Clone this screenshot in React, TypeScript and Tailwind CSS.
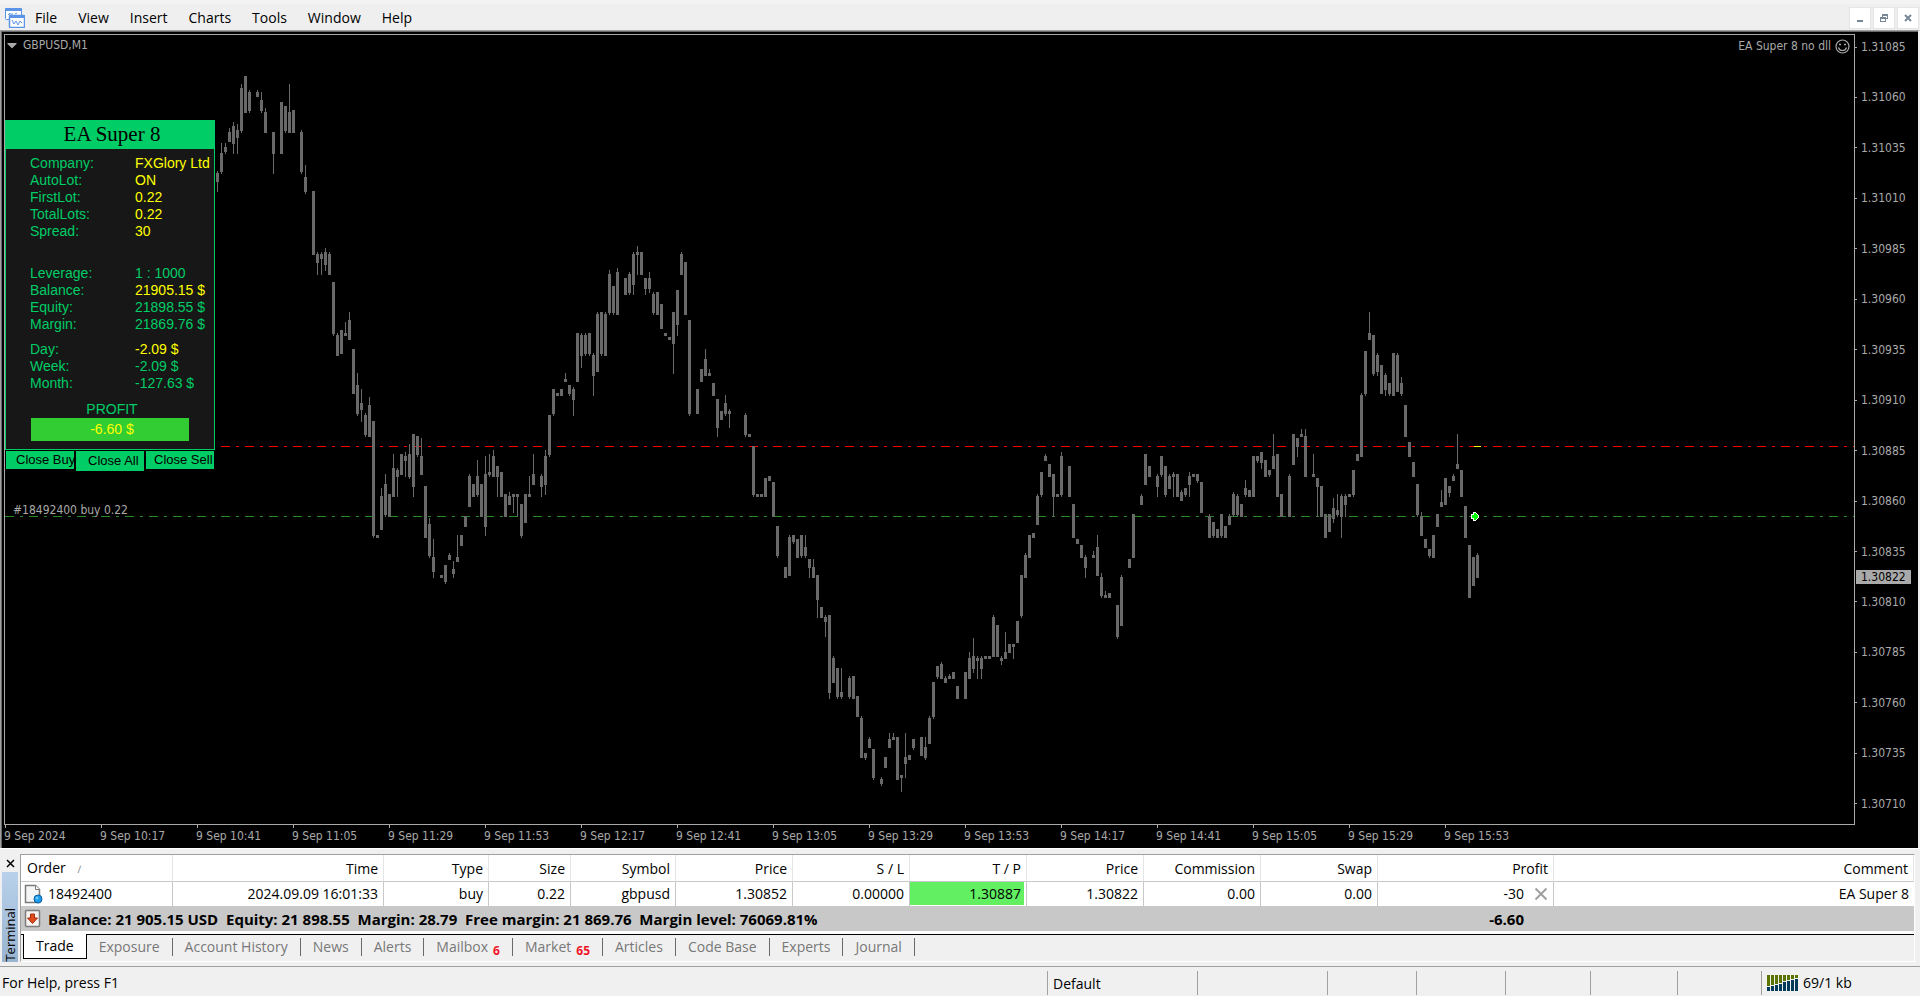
import { useState } from "react";
import { FaCaretDown } from "react-icons/fa";

// [x, high, bodyTop, bodyBottom, low]
type Candle = [number, number, number, number, number];

const candles: Candle[] = [
  [217, 171, 173, 182, 192], [221, 143, 153, 172, 174], [225, 143, 147, 152, 154], [229, 128, 132, 142, 142],
  [233, 122, 126, 144, 154], [237, 124, 130, 138, 154], [241, 84, 88, 131, 133], [245, 76, 76, 113, 113],
  [249, 90, 92, 111, 113], [257, 90, 92, 97, 97], [261, 92, 100, 111, 113], [265, 108, 112, 133, 133],
  [273, 132, 132, 154, 174], [281, 102, 102, 154, 154], [285, 106, 106, 131, 133], [289, 84, 112, 133, 133],
  [293, 110, 110, 133, 133], [301, 130, 132, 172, 174], [305, 165, 177, 192, 194], [313, 191, 191, 255, 255],
  [317, 252, 254, 263, 275], [321, 252, 254, 259, 275], [325, 248, 252, 265, 271], [329, 252, 254, 275, 275],
  [333, 282, 282, 334, 336], [337, 333, 335, 356, 356], [341, 330, 330, 354, 354], [345, 322, 333, 336, 336],
  [349, 312, 320, 340, 340], [353, 349, 349, 394, 394], [357, 373, 385, 414, 416], [361, 389, 403, 410, 422],
  [365, 413, 415, 435, 437], [369, 397, 405, 437, 437], [373, 421, 421, 536, 538], [377, 535, 535, 538, 538],
  [381, 488, 496, 530, 530], [385, 474, 484, 515, 517], [389, 494, 494, 517, 517], [393, 454, 468, 497, 497],
  [397, 468, 470, 477, 497], [401, 454, 454, 475, 475], [405, 452, 456, 461, 477], [409, 444, 454, 477, 479],
  [413, 434, 434, 487, 497], [417, 436, 436, 455, 457], [421, 438, 456, 475, 475], [425, 486, 486, 538, 538],
  [429, 518, 524, 556, 558], [433, 539, 557, 572, 578], [441, 575, 575, 578, 578], [445, 565, 565, 582, 584],
  [449, 553, 555, 560, 560], [453, 561, 569, 574, 578], [457, 535, 557, 562, 562], [461, 535, 535, 546, 546],
  [465, 516, 516, 527, 527], [469, 474, 476, 507, 507], [473, 484, 484, 497, 497], [477, 460, 476, 495, 497],
  [481, 484, 484, 517, 517], [485, 456, 474, 527, 536], [489, 454, 472, 475, 477], [493, 450, 456, 477, 477],
  [497, 466, 466, 477, 497], [501, 472, 472, 497, 497], [505, 494, 494, 517, 517], [509, 492, 496, 505, 505],
  [513, 494, 494, 497, 513], [517, 494, 494, 497, 517], [521, 504, 504, 536, 538], [525, 494, 494, 523, 523],
  [529, 476, 494, 497, 497], [533, 454, 474, 485, 485], [541, 474, 476, 487, 497], [545, 450, 456, 485, 495],
  [549, 415, 415, 455, 457], [553, 389, 389, 414, 416], [557, 393, 393, 396, 396], [561, 389, 389, 396, 396],
  [565, 373, 379, 382, 382], [569, 385, 385, 394, 396], [573, 387, 389, 400, 416], [577, 333, 333, 382, 382],
  [581, 333, 335, 356, 368], [585, 333, 335, 354, 356], [589, 333, 333, 354, 356], [593, 353, 355, 376, 396],
  [597, 312, 314, 372, 372], [601, 312, 312, 354, 356], [605, 312, 314, 356, 356], [609, 270, 274, 313, 315],
  [613, 286, 286, 313, 315], [617, 268, 272, 315, 315], [625, 278, 278, 295, 295], [629, 272, 274, 293, 295],
  [633, 252, 254, 285, 295], [637, 246, 252, 255, 275], [641, 252, 252, 275, 275], [645, 278, 278, 289, 295],
  [649, 272, 278, 289, 293], [653, 292, 294, 313, 315], [657, 292, 292, 315, 315], [661, 304, 304, 329, 329],
  [665, 333, 333, 336, 336], [669, 337, 337, 340, 340], [673, 312, 312, 344, 374], [677, 290, 290, 325, 336],
  [681, 252, 254, 275, 275], [685, 262, 262, 315, 315], [689, 320, 320, 414, 416], [697, 389, 389, 414, 414],
  [701, 369, 369, 382, 382], [705, 349, 359, 376, 376], [709, 369, 373, 376, 376], [713, 383, 383, 396, 396],
  [717, 399, 399, 428, 437], [721, 411, 411, 420, 420], [725, 395, 403, 414, 416], [729, 409, 411, 414, 428],
  [745, 413, 415, 435, 437], [749, 434, 434, 437, 437], [753, 446, 446, 495, 497], [757, 494, 494, 497, 497],
  [761, 494, 494, 497, 497], [765, 478, 478, 497, 497], [769, 476, 476, 481, 481], [773, 482, 482, 517, 517],
  [777, 526, 526, 556, 558], [785, 567, 567, 578, 578], [789, 535, 537, 576, 576], [793, 535, 535, 542, 544],
  [797, 539, 539, 558, 558], [801, 535, 535, 556, 558], [805, 535, 547, 556, 558], [809, 559, 559, 568, 578],
  [813, 559, 567, 578, 578], [817, 575, 575, 600, 618], [821, 607, 607, 618, 618], [825, 615, 617, 622, 637],
  [829, 615, 615, 693, 699], [833, 656, 658, 683, 683], [837, 668, 668, 697, 699], [841, 668, 692, 697, 699],
  [849, 676, 678, 697, 699], [853, 676, 676, 699, 699], [857, 696, 696, 717, 717], [861, 716, 718, 758, 758],
  [865, 753, 753, 758, 760], [869, 737, 739, 748, 748], [873, 749, 749, 778, 780], [881, 777, 779, 784, 786],
  [885, 757, 757, 768, 768], [889, 733, 739, 748, 748], [893, 733, 737, 740, 740], [897, 737, 737, 780, 780],
  [901, 775, 775, 778, 792], [905, 733, 757, 764, 778], [909, 755, 755, 760, 760], [913, 739, 739, 748, 750],
  [921, 737, 737, 756, 756], [925, 737, 747, 758, 760], [929, 716, 718, 744, 744], [933, 682, 682, 717, 719],
  [937, 666, 666, 677, 679], [941, 662, 664, 679, 679], [945, 676, 678, 683, 683], [949, 674, 676, 679, 679],
  [953, 672, 672, 679, 679], [957, 686, 686, 699, 699], [965, 672, 672, 699, 699], [969, 652, 658, 679, 679],
  [973, 638, 656, 669, 673], [977, 656, 658, 661, 679], [981, 656, 658, 669, 679], [985, 656, 656, 659, 659],
  [989, 656, 656, 659, 659], [993, 615, 617, 657, 657], [997, 625, 625, 657, 657], [1001, 656, 658, 661, 665],
  [1005, 632, 652, 659, 659], [1009, 644, 644, 653, 653], [1013, 644, 644, 647, 659], [1017, 621, 621, 643, 643],
  [1021, 575, 575, 616, 618], [1025, 553, 555, 578, 578], [1029, 535, 535, 558, 558], [1033, 533, 533, 538, 538],
  [1037, 494, 496, 525, 525], [1041, 472, 472, 495, 497], [1045, 454, 456, 461, 461], [1049, 464, 464, 477, 477],
  [1053, 474, 474, 497, 517], [1057, 494, 494, 497, 497], [1061, 452, 456, 495, 497], [1069, 466, 466, 497, 497],
  [1073, 504, 504, 538, 538], [1077, 539, 539, 544, 544], [1081, 545, 545, 558, 558], [1085, 555, 557, 568, 578],
  [1093, 551, 555, 558, 558], [1097, 535, 547, 576, 576], [1101, 573, 577, 596, 598], [1105, 591, 595, 598, 598],
  [1109, 593, 593, 598, 598], [1117, 605, 605, 637, 639], [1121, 575, 577, 626, 626], [1129, 559, 559, 568, 568],
  [1133, 514, 514, 558, 558], [1141, 494, 496, 505, 505], [1145, 454, 454, 485, 485], [1149, 466, 466, 477, 477],
  [1157, 474, 476, 487, 497], [1161, 456, 456, 475, 477], [1165, 466, 466, 495, 497], [1169, 474, 476, 489, 489],
  [1173, 472, 474, 477, 497], [1177, 474, 474, 497, 497], [1181, 490, 492, 501, 501], [1185, 488, 488, 495, 497],
  [1189, 472, 476, 485, 497], [1193, 474, 474, 477, 477], [1197, 474, 474, 481, 483], [1201, 482, 482, 513, 513],
  [1209, 514, 516, 538, 538], [1213, 522, 522, 536, 538], [1217, 529, 529, 538, 538], [1221, 514, 514, 536, 538],
  [1225, 526, 526, 538, 538], [1229, 514, 516, 525, 525], [1233, 492, 494, 515, 517], [1237, 494, 496, 515, 517],
  [1241, 504, 504, 517, 517], [1245, 480, 488, 495, 497], [1249, 490, 490, 497, 497], [1253, 456, 456, 497, 497],
  [1257, 456, 456, 461, 463], [1261, 452, 452, 463, 469], [1265, 460, 460, 477, 477], [1269, 470, 470, 475, 477],
  [1273, 434, 456, 469, 469], [1277, 454, 454, 497, 497], [1281, 494, 494, 517, 517], [1289, 474, 476, 517, 517],
  [1293, 434, 434, 465, 465], [1297, 438, 438, 447, 457], [1301, 429, 434, 437, 437], [1305, 429, 436, 477, 477],
  [1313, 454, 474, 477, 477], [1317, 478, 478, 487, 517], [1321, 486, 486, 517, 517], [1325, 514, 514, 538, 538],
  [1329, 514, 514, 532, 532], [1333, 498, 508, 519, 523], [1337, 494, 510, 515, 517], [1341, 494, 496, 517, 538],
  [1345, 494, 496, 505, 517], [1349, 494, 494, 497, 497], [1353, 470, 470, 495, 497], [1357, 454, 454, 461, 461],
  [1361, 393, 395, 457, 457], [1365, 351, 351, 394, 396], [1369, 312, 333, 340, 340], [1373, 335, 335, 374, 376],
  [1377, 353, 355, 372, 376], [1381, 365, 365, 394, 394], [1385, 373, 375, 390, 396], [1389, 383, 383, 394, 396],
  [1393, 353, 353, 396, 396], [1397, 353, 355, 392, 392], [1401, 377, 383, 394, 396], [1405, 405, 405, 437, 437],
  [1409, 442, 442, 457, 457], [1413, 462, 462, 477, 477], [1417, 484, 484, 515, 517], [1421, 512, 516, 536, 536],
  [1425, 539, 539, 548, 548], [1429, 549, 549, 556, 558], [1433, 535, 535, 558, 558], [1437, 514, 514, 527, 527],
  [1441, 490, 502, 507, 507], [1445, 478, 478, 505, 505], [1449, 486, 486, 493, 497], [1453, 474, 476, 481, 481],
  [1457, 434, 464, 469, 469], [1461, 470, 470, 497, 497], [1465, 506, 506, 538, 538], [1469, 545, 545, 598, 598],
  [1473, 557, 557, 586, 586], [1477, 553, 555, 578, 578],
];

const menus = ["File", "View", "Insert", "Charts", "Tools", "Window", "Help"];

const prices = [
  "1.31085", "1.31060", "1.31035", "1.31010", "1.30985", "1.30960", "1.30935", "1.30910",
  "1.30885", "1.30860", "1.30835", "1.30810", "1.30785", "1.30760", "1.30735", "1.30710",
];

const times = [
  "9 Sep 2024", "9 Sep 10:17", "9 Sep 10:41", "9 Sep 11:05", "9 Sep 11:29", "9 Sep 11:53", "9 Sep 12:17", "9 Sep 12:41",
  "9 Sep 13:05", "9 Sep 13:29", "9 Sep 13:53", "9 Sep 14:17", "9 Sep 14:41", "9 Sep 15:05", "9 Sep 15:29", "9 Sep 15:53",
];

interface InfoRow {
  label: string;
  value: string;
  highlight?: boolean;
}

const accountRows: InfoRow[] = [
  { label: "Company:", value: "FXGlory Ltd", highlight: true },
  { label: "AutoLot:", value: "ON", highlight: true },
  { label: "FirstLot:", value: "0.22", highlight: true },
  { label: "TotalLots:", value: "0.22", highlight: true },
  { label: "Spread:", value: "30", highlight: true },
];

const balanceRows: InfoRow[] = [
  { label: "Leverage:", value: "1 : 1000" },
  { label: "Balance:", value: "21905.15 $", highlight: true },
  { label: "Equity:", value: "21898.55 $" },
  { label: "Margin:", value: "21869.76 $" },
];

const periodRows: InfoRow[] = [
  { label: "Day:", value: "-2.09 $", highlight: true },
  { label: "Week:", value: "-2.09 $" },
  { label: "Month:", value: "-127.63 $" },
];

const columns = [
  { name: "Time", width: "w-[211px]" },
  { name: "Type", width: "w-[105px]" },
  { name: "Size", width: "w-[82px]" },
  { name: "Symbol", width: "w-[105px]" },
  { name: "Price", width: "w-[117px]" },
  { name: "S / L", width: "w-[117px]" },
  { name: "T / P", width: "w-[117px]" },
  { name: "Price", width: "w-[117px]" },
  { name: "Commission", width: "w-[117px]" },
  { name: "Swap", width: "w-[117px]" },
  { name: "Profit", width: "w-[176px]" },
  { name: "Comment", width: "" },
];

const tabs = [
  { name: "Trade" },
  { name: "Exposure" },
  { name: "Account History" },
  { name: "News" },
  { name: "Alerts" },
  { name: "Mailbox", badge: "6" },
  { name: "Market", badge: "65" },
  { name: "Articles" },
  { name: "Code Base" },
  { name: "Experts" },
  { name: "Journal" },
];

const AppIcon = () => (
  <svg width="20" height="20" viewBox="0 0 20 20" className="shrink-0" aria-hidden="true">
    <rect x="0.5" y="0.5" width="16" height="11" rx="1" fill="#fff" stroke="#5b93e6" />
    <rect x="0" y="0" width="17" height="3" rx="1" fill="#5b93e6" />
    <path d="M3 7l2-2v3M7 5v3M10 6l2-1" stroke="#5b93e6" fill="none" />
    <rect x="4.5" y="7.5" width="15" height="12" rx="1" fill="#fff" stroke="#5b93e6" strokeWidth="1.500" />
    <rect x="4" y="7" width="16" height="3" rx="1" fill="#5b93e6" />
    <path d="M7 12l2 4 2-3 2 4 2-4 2 2" stroke="#5b93e6" fill="none" />
  </svg>
);

const OrderIcon = () => (
  <svg width="19" height="20" viewBox="0 0 19 20" className="shrink-0" aria-hidden="true">
    <path d="M1.500 1.500h10l4 4v13h-14z" fill="#f6f6f6" stroke="#7c7c7c" strokeWidth="1.500" />
    <path d="M11.500 1.500v4h4" fill="#fff" stroke="#7c7c7c" />
    <circle cx="14" cy="15" r="4" fill="#1e9be8" stroke="#0b5fa5" />
    <circle cx="13" cy="14" r="1.500" fill="#6cc6fb" />
  </svg>
);

const BalanceIcon = () => (
  <svg width="19" height="20" viewBox="0 0 19 20" className="shrink-0" aria-hidden="true">
    <rect x="1.500" y="1.500" width="14" height="16" rx="1" fill="#f6f3f1" stroke="#7c7c7c" strokeWidth="1.500" />
    <path d="M6.500 5h4v4h3L8.500 14.500 3.500 9h3z" fill="#e04a1c" stroke="#a52c0c" />
  </svg>
);

const SmileIcon = () => (
  <svg width="15" height="15" viewBox="0 0 15 15" fill="none" stroke="#a9a9a9" aria-hidden="true">
    <circle cx="7.500" cy="7.500" r="6.500" strokeWidth="1.200" />
    <path d="M3.500 8.500c1 4 7 4 8 0" strokeWidth="1.200" />
    <path d="M4 5.500h2M9 5.500h2" strokeWidth="1.500" />
  </svg>
);

const TrafficIcon = () => (
  <svg width="31" height="16" viewBox="0 0 31 16" aria-hidden="true">
    {[11, 10, 9, 8, 6, 5, 4, 3].map((h, i) => (
      <g key={i}>
        <rect x={i * 4} y="0" width="3" height={h} fill="#5b7300" />
        <rect x={i * 4} y={h + 1} width="3" height={15 - h} fill="#003c5a" />
      </g>
    ))}
  </svg>
);

const CandleChart = () => (
  <svg className="absolute inset-0 h-full w-full" shapeRendering="crispEdges" aria-label="GBPUSD M1 candles">
    <line x1="0" x2="100%" y1="411.500" y2="411.500" stroke="#ff0000" strokeDasharray="9 6 3 6" />
    <line x1="0" x2="100%" y1="481.500" y2="481.500" stroke="#228b22" strokeDasharray="9 6 3 6" />
    <g transform="translate(-5 -35)" fill="#696969">
      {candles.map(([x, high, top, bottom, low]) => (
        <g key={x}>
          <rect x={x} y={high} width="1" height={low - high} />
          <rect x={x - 1} y={top} width="3" height={bottom - top} />
        </g>
      ))}
      <rect x="1474" y="446" width="7" height="1" fill="#ffff00" />
      <path d="M1471 514h2v-2h3v1l3 3v1l-3 3v1h-3v-2h-2z" fill="#fff" />
      <path d="M1472 515h2v-2h1l3 3v1l-3 3h-1v-2h-2z" fill="#00ff00" />
    </g>
  </svg>
);

const InfoGroup = ({ rows }: { rows: InfoRow[] }) => (
  <dl>
    {rows.map((row) => (
      <div key={row.label} className="flex h-[17px] whitespace-nowrap">
        <dt className="w-[105px] shrink-0">{row.label}</dt>
        <dd className={row.highlight ? "text-[#ffff00]" : ""}>{row.value}</dd>
      </div>
    ))}
  </dl>
);

const AdvisorPanel = () => (
  <div className="absolute top-[85px] left-0 w-[210px] font-['Liberation_Sans',sans-serif]">
    <div className="border border-[#00cd66] bg-[#171717] pb-2 text-sm leading-[17px] text-[#00cd66]">
      <h1 className="flex h-7 items-center justify-center bg-[#00cd66] pb-[2px] pl-1 font-['Liberation_Serif',serif] text-[21px] text-black">
        EA Super 8
      </h1>
      <div className="pt-[6px] pl-6">
        <InfoGroup rows={accountRows} />
        <div className="pt-[25px]">
          <InfoGroup rows={balanceRows} />
        </div>
        <div className="pt-2">
          <InfoGroup rows={periodRows} />
        </div>
      </div>
      <p className="pt-[9px] pl-1 text-center">PROFIT</p>
      <p className="mr-[25px] ml-[25px] flex h-[23px] items-center justify-center bg-[#32cd32] pl-1 text-[#ffff00]">
        -6.60 $
      </p>
    </div>
    <div className="grid grid-cols-3 items-start gap-[2px] px-px pt-px text-[13px] leading-[18px] whitespace-nowrap text-black">
      <button className="h-[18px] overflow-hidden bg-[#00cd66] pl-[10px] text-left">Close Buy</button>
      <button className="h-5 overflow-hidden bg-[#00cd66] pl-3 text-left leading-5">Close All</button>
      <button className="h-[18px] overflow-hidden bg-[#00cd66] pl-2 text-left">Close Sell</button>
    </div>
  </div>
);

const MenuBar = () => (
  <header className="flex h-[30px] shrink-0 items-center border-t-4 border-[#f3f3f3] bg-[#efefef] pt-px pr-px pl-[5px]">
    <AppIcon />
    <nav className="flex flex-1 gap-px">
      {menus.map((menu) => (
        <button key={menu} className="px-[10px]">
          {menu}
        </button>
      ))}
    </nav>
    <div className="flex gap-[2px]">
      <button aria-label="Minimize" className="flex h-[22px] w-[22px] items-center justify-center border border-[#e5e5e5] bg-white">
        <svg width="10" height="10" viewBox="0 0 10 10">
          <path d="M2 7h6v2H2z" fill="#788796" />
        </svg>
      </button>
      <button aria-label="Restore" className="flex h-[22px] w-[22px] items-center justify-center border border-[#e5e5e5] bg-white">
        <svg width="10" height="10" viewBox="0 0 10 10" fill="none" stroke="#788796" shapeRendering="crispEdges">
          <path d="M3 1.500h6M3.500 1v3M8.500 1v5M6 5.500h3M1 4h6M1 5h6M1.500 4v5M6.500 4v5M1 8.500h6M3 2.500h6" />
        </svg>
      </button>
      <button aria-label="Close" className="flex h-[22px] w-[22px] items-center justify-center border border-[#e5e5e5] bg-white">
        <svg width="10" height="10" viewBox="0 0 10 10">
          <path d="M2 2l6 6M8 2l-6 6" stroke="#788796" strokeWidth="2" />
        </svg>
      </button>
    </div>
  </header>
);

const ChartWindow = () => (
  <main className="flex min-h-0 flex-1 border-t border-r-2 border-l border-t-[#a0a0a0] border-r-[#f0f0f0] border-l-[#a0a0a0] font-['DejaVu_Sans_Condensed','Noto_Sans',sans-serif] text-xs text-[#a9a9a9]">
    <div className="flex min-w-0 flex-1 flex-col border-t border-l border-[#696969] bg-black pt-[2px] pl-[2px]">
      <div className="flex min-h-0 flex-1">
        <div className="relative min-w-0 flex-1 overflow-hidden border border-[#a9a9a9]">
          <CandleChart />
          <div className="relative flex items-center justify-between pt-px pr-1 pl-[2px]">
            <span className="flex items-center gap-[6px]">
              <FaCaretDown className="h-4 w-[10px]" preserveAspectRatio="none" />
              GBPUSD,M1
            </span>
            <span className="flex items-center gap-1 pt-[2px]">
              EA Super 8 no dll <SmileIcon />
            </span>
          </div>
          <p className="absolute top-[467px] left-2">#18492400 buy 0.22</p>
          <AdvisorPanel />
        </div>
        <div className="relative flex w-[63px] shrink-0 flex-col justify-between pt-[5px] pb-[13px]">
          {prices.map((price) => (
            <div key={price} className="flex items-center gap-1">
              <span className="h-px w-[2px] bg-[#a9a9a9]" />
              {price}
            </div>
          ))}
          <div className="absolute top-[536px] left-px w-[55px] bg-[#a9a9a9] pl-[5px] leading-[14px] text-black">1.30822</div>
        </div>
      </div>
      <div className="flex h-[23px] shrink-0 overflow-hidden">
        {times.map((time) => (
          <div key={time} className="w-24 shrink-0">
            <div className="ml-px h-[3px] w-px bg-[#a9a9a9]" />
            {time}
          </div>
        ))}
      </div>
    </div>
  </main>
);

const TradeTable = () => {
  const cell = "h-6 border-r border-[#c8c8c8] p-0 pr-[5px] text-right";

  return (
    <table className="w-full table-fixed border-separate border-spacing-0 bg-white leading-5">
      <thead>
        <tr>
          <th className="h-[27px] w-[152px] border-r border-b border-r-[#e5e5e5] border-b-[#c8c8c8] p-0 pt-px pl-[6px] text-left font-normal">
            Order <span className="pl-2 text-[10px] text-[#808080]">∕</span>
          </th>
          {columns.map((col, i) => (
            <th
              key={i}
              className={`${col.width} h-[27px] border-r border-b border-r-[#e5e5e5] border-b-[#c8c8c8] p-0 pt-px pr-[5px] text-right font-normal`}
            >
              {col.name}
            </th>
          ))}
        </tr>
      </thead>
      <tbody>
        <tr>
          <td className="h-6 border-r border-[#c8c8c8] p-0 pl-[3px]">
            <div className="flex items-center gap-[5px]">
              <OrderIcon />
              18492400
            </div>
          </td>
          <td className={cell}>2024.09.09 16:01:33</td>
          <td className={cell}>buy</td>
          <td className={cell}>0.22</td>
          <td className={cell}>gbpusd</td>
          <td className={cell}>1.30852</td>
          <td className={cell}>0.00000</td>
          <td className="h-6 border-r border-[#c8c8c8] p-0 text-right">
            <div className="mr-[2px] mb-px h-[23px] bg-[#62f062] pr-[3px] leading-6">1.30887</div>
          </td>
          <td className={cell}>1.30822</td>
          <td className={cell}>0.00</td>
          <td className={cell}>0.00</td>
          <td className={cell}>
            <div className="flex items-center justify-end gap-[10px]">
              -30
              <button aria-label="Close order">
                <svg width="14" height="14" viewBox="0 0 14 14">
                  <path d="M1.500 1.500l11 11M12.500 1.500l-11 11" stroke="#a0a0a0" strokeWidth="2" />
                </svg>
              </button>
            </div>
          </td>
          <td className="h-6 p-0 pr-[5px] text-right">EA Super 8</td>
        </tr>
        <tr className="bg-[#c8c8c8] text-[15px] font-bold">
          <td colSpan={11} className="h-[25px] p-0 pl-[3px]">
            <div className="flex items-center gap-[5px] whitespace-pre">
              <BalanceIcon />
              {"Balance: 21 905.15 USD  Equity: 21 898.55  Margin: 28.79  Free margin: 21 869.76  Margin level: 76069.81%"}
            </div>
          </td>
          <td className="p-0 pr-[30px] text-right">-6.60</td>
          <td />
        </tr>
      </tbody>
    </table>
  );
};

const Terminal = () => {
  const [activeTab, setActiveTab] = useState("Trade");

  return (
    <section className="flex shrink-0 border-t border-white pt-[5px] pr-[5px] pb-1">
      <div className="flex w-5 shrink-0 flex-col items-center">
        <button aria-label="Close terminal" className="flex h-[18px] items-center">
          <svg width="9" height="9" viewBox="0 0 9 9">
            <path d="M1 1l7 7M8 1l-7 7" stroke="#000" strokeWidth="1.500" />
          </svg>
        </button>
        <div className="flex w-4 flex-1 items-center justify-end bg-linear-to-b from-[#b9d1ea] to-[#99b4d1] [writing-mode:vertical-rl]">
          <span className="rotate-180 py-1 text-[13px] leading-4">Terminal</span>
        </div>
      </div>
      <div className="min-w-0 flex-1 border-t border-r border-b border-l border-t-[#a0a0a0] border-r-white border-b-white border-l-[#a0a0a0]">
        <TradeTable />
        <div role="tablist" className="flex h-[30px] border-t-3 border-white">
          <div className="flex flex-1 border-t border-black pl-[2px]">
            {tabs.map((tab) => (
              <button
                key={tab.name}
                role="tab"
                aria-selected={tab.name === activeTab}
                onClick={() => setActiveTab(tab.name)}
                className={
                  tab.name === activeTab
                    ? "-mt-px h-[25px] border-r border-b border-l border-black bg-white px-3"
                    : "flex h-6 items-center text-[#787878]"
                }
              >
                {tab.name === activeTab ? (
                  tab.name
                ) : (
                  <span className="flex h-[18px] items-center border-r border-[#696969] px-3">
                    {tab.name}
                    {tab.badge && <span className="pt-2 pl-[5px] text-xs font-bold text-[#f01428]">{tab.badge}</span>}
                  </span>
                )}
              </button>
            ))}
          </div>
        </div>
      </div>
    </section>
  );
};

const StatusBar = () => {
  const cell = "h-6 shrink-0 border-l border-[#a0a0a0] pl-[5px]";

  return (
    <footer className="flex h-[30px] shrink-0 items-center border-t border-[#a0a0a0] pt-[3px] leading-[26px]">
      <span className="flex-1 pl-[2px]">For Help, press F1</span>
      <span className={`${cell} w-[150px]`}>Default</span>
      <span className={`${cell} w-[130px]`} />
      <span className={`${cell} w-[89px]`} />
      <span className={`${cell} w-[89px]`} />
      <span className={`${cell} w-[85px]`} />
      <span className={`${cell} w-[87px]`} />
      <span className={`${cell} w-[84px]`} />
      <span className={`${cell} flex w-[159px] items-center gap-[5px]`}>
        <TrafficIcon /> 69/1 kb
      </span>
    </footer>
  );
};

const App = () => {
  return (
    <div className="flex h-screen flex-col overflow-hidden bg-[#f0f0f0] font-['Open_Sans',sans-serif] text-sm text-black">
      <MenuBar />
      <ChartWindow />
      <Terminal />
      <StatusBar />
    </div>
  );
};

export default App;
